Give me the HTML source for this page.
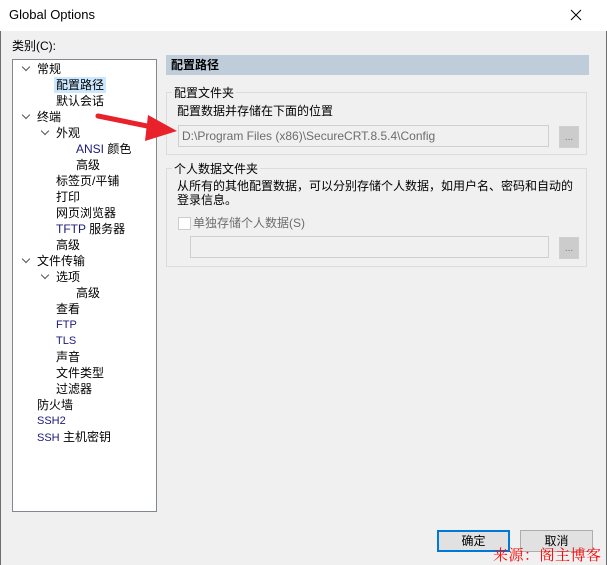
<!DOCTYPE html>
<html><head><meta charset="utf-8"><style>
*{margin:0;padding:0;box-sizing:border-box}
body{width:607px;height:565px;overflow:hidden;background:#f0f0f0;font-family:"Liberation Sans","Microsoft YaHei","Noto Sans CJK SC",sans-serif;font-size:12px;color:#000;position:relative}
.a{position:absolute;white-space:nowrap;line-height:16px}
.win{position:absolute;left:0;top:0;width:607px;height:565px;border-left:1px solid #6e6e6e;border-right:1px solid #6e6e6e}
.title{position:absolute;left:0;top:0;width:607px;height:31px;background:#fff}
.tree{position:absolute;left:12px;top:59px;width:145px;height:453px;background:#fff;border:1px solid #828790}
.chev{position:absolute;width:6px;height:6px;border-right:1px solid #555;border-bottom:1px solid #555;transform:rotate(45deg)}
.grp{position:absolute;border:1px solid #dcdcdc}
.leg{position:absolute;background:#f0f0f0;padding:0 2px;line-height:14px}
.field{position:absolute;border:1px solid #cfcfcf;background:#f0f0f0;color:#6d6d6d;padding-left:3px;line-height:20px;font-size:12px}
.dots{position:absolute;width:20px;height:22px;border:1px solid #cfcfcf;background:#ccc;color:#777;text-align:center;line-height:22px;font-size:10px}
.btn{position:absolute;width:73px;height:22px;background:#e1e1e1;border:1px solid #adadad;text-align:center;line-height:20px}
</style></head><body>
<div class="win"></div>
<div class="title"></div>
<div class="a" style="left:9px;top:7px;font-size:13px">Global Options</div>
<svg style="position:absolute;left:570px;top:9px" width="12" height="12"><path d="M1 1L11 11M11 1L1 11" stroke="#000" stroke-width="1"/></svg>
<div class="a" style="left:12px;top:38px">类别(C):</div>
<div class="tree"></div>
<div class="chev" style="left:23px;top:64px"></div>
<div class="a" style="left:37px;top:61px">常规</div>
<div class="a" style="left:54px;top:77px;background:#cce8ff;padding:0 2px">配置路径</div>
<div class="a" style="left:56px;top:93px">默认会话</div>
<div class="chev" style="left:23px;top:112px"></div>
<div class="a" style="left:37px;top:109px">终端</div>
<div class="chev" style="left:42px;top:128px"></div>
<div class="a" style="left:56px;top:125px">外观</div>
<div class="a" style="left:76px;top:141px"><span style="color:#1a1a7a">ANSI</span> 颜色</div>
<div class="a" style="left:76px;top:157px">高级</div>
<div class="a" style="left:56px;top:173px">标签页/平铺</div>
<div class="a" style="left:56px;top:189px">打印</div>
<div class="a" style="left:56px;top:205px">网页浏览器</div>
<div class="a" style="left:56px;top:221px"><span style="color:#1a1a7a">TFTP</span> 服务器</div>
<div class="a" style="left:56px;top:237px">高级</div>
<div class="chev" style="left:23px;top:256px"></div>
<div class="a" style="left:37px;top:253px">文件传输</div>
<div class="chev" style="left:42px;top:272px"></div>
<div class="a" style="left:56px;top:269px">选项</div>
<div class="a" style="left:76px;top:285px">高级</div>
<div class="a" style="left:56px;top:301px">查看</div>
<div class="a" style="left:56px;top:317px;color:#1a1a7a;font-size:11px">FTP</div>
<div class="a" style="left:56px;top:333px;color:#1a1a7a;font-size:11px">TLS</div>
<div class="a" style="left:56px;top:349px">声音</div>
<div class="a" style="left:56px;top:365px">文件类型</div>
<div class="a" style="left:56px;top:381px">过滤器</div>
<div class="a" style="left:37px;top:397px">防火墙</div>
<div class="a" style="left:37px;top:413px;color:#1a1a7a;font-size:11px">SSH2</div>
<div class="a" style="left:37px;top:429px"><span style="color:#1a1a7a;font-size:11px">SSH</span> 主机密钥</div>

<div style="position:absolute;left:166px;top:55px;width:423px;height:20px;background:#bfcddb"></div>
<div class="a" style="left:171px;top:57px;font-weight:bold">配置路径</div>

<div class="grp" style="left:166px;top:92px;width:421px;height:63px"></div>
<div class="leg" style="left:172px;top:86px">配置文件夹</div>
<div class="a" style="left:177px;top:103px">配置数据并存储在下面的位置</div>
<div class="field" style="left:178px;top:125px;width:371px;height:22px">D:\Program Files (x86)\SecureCRT.8.5.4\Config</div>
<div class="dots" style="left:559px;top:126px">...</div>

<div class="grp" style="left:166px;top:168px;width:421px;height:99px"></div>
<div class="leg" style="left:172px;top:162px">个人数据文件夹</div>
<div class="a" style="left:177px;top:179px;line-height:14px">从所有的其他配置数据，可以分别存储个人数据，如用户名、密码和自动的<br>登录信息。</div>
<div style="position:absolute;left:178px;top:217px;width:13px;height:13px;border:1px solid #ccc;background:#fff"></div>
<div class="a" style="left:193px;top:215px;color:#6d6d6d">单独存储个人数据(S)</div>
<div class="field" style="left:190px;top:236px;width:359px;height:22px"></div>
<div class="dots" style="left:559px;top:237px">...</div>

<div class="btn" style="left:437px;top:530px;border:2px solid #0078d7;line-height:18px">确定</div>
<div class="btn" style="left:520px;top:530px">取消</div>
<div class="a" style="left:493px;top:546px;color:#f00;font-size:15px;line-height:18px;letter-spacing:0.5px;font-family:'Noto Serif CJK SC',serif">来源：阁主博客</div>

<svg style="position:absolute;left:0;top:0" width="607" height="565"><line x1="98" y1="116" x2="152" y2="127" stroke="#e8212a" stroke-width="5" stroke-linecap="round"/><polygon points="148,115 177,131 145,141" fill="#e8212a"/></svg>
</body></html>
